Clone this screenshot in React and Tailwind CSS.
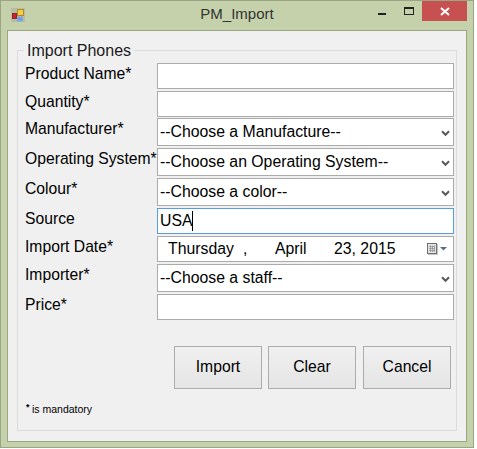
import React from "react";

const rows = [
    { label: "Product Name*", type: "text", value: "" },
    { label: "Quantity*", type: "text", value: "" },
    { label: "Manufacturer*", type: "select", value: "--Choose a Manufacture--", rowClass: "-mt-px" },
    { label: "Operating System*", type: "select", value: "--Choose an Operating System--" },
    { label: "Colour*", type: "select", value: "--Choose a color--" },
    { label: "Source", type: "focus", value: "USA" },
    { label: "Import Date*", type: "date" },
    { label: "Importer*", type: "select", value: "--Choose a staff--" },
    { label: "Price*", type: "text", value: "" },
];

const buttons = [
    { label: "Import", className: "" },
    { label: "Clear", className: "" },
    { label: "Cancel", className: "ml-px" },
];

const AppIcon = () => (
    <svg width="14" height="14" viewBox="0 0 14 14">
        <rect width="14" height="14" fill="#b4bfa6" />
        <rect x="1.5" y="5.5" width="4" height="5" fill="#d0202a" stroke="#8a2a2a" />
        <rect x="6.5" y="1.5" width="6" height="6" fill="#f7cb45" stroke="#b08a2a" />
        <rect x="6.5" y="9" width="5" height="4" fill="#6d9fe6" stroke="#88a8d8" />
    </svg>
);

const CalendarIcon = () => (
    <svg width="20" height="12" viewBox="0 0 20 12" className="block">
        <rect x="0.5" y="0.5" width="9" height="10" fill="#e4e4e4" stroke="#707070" />
        <path d="M2 3.5h6M2 5.5h6M2 7.5h6M3.5 2.5v6.5M5.5 2.5v6.5M7.5 2.5v6.5" stroke="#959595" strokeWidth="0.8" />
        <path d="M1 11.5h9.5V1" fill="none" stroke="#c4c4c4" />
        <path d="M13 4h7l-3.5 3.5z" fill="#56708f" />
    </svg>
);

const SelectArrow = () => (
    <svg width="9" height="7" viewBox="0 0 9 7" className="mt-[2px]">
        <path d="M1 1.2l3.5 3.6L8 1.2" fill="none" stroke="#5a5a5a" strokeWidth="2" />
    </svg>
);

const Field = ({ row }) => {
    if (row.type === "select") {
        return (
            <div className="h-[28px] bg-white border border-[#ababab] flex items-center justify-between pl-[2px] pr-[3px] text-[15.8px] leading-none">
                <span>{row.value}</span>
                <SelectArrow />
            </div>
        );
    }
    if (row.type === "date") {
        return (
            <div className="h-[26px] bg-white border border-[#ababab] flex items-center pl-[10px] pr-[6px] text-[15.8px] leading-none">
                <span className="w-[75px]">Thursday</span>
                <span className="w-[32px]">,</span>
                <span className="w-[59px]">April</span>
                <span>23, 2015</span>
                <span className="ml-auto">
                    <CalendarIcon />
                </span>
            </div>
        );
    }
    if (row.type === "focus") {
        return (
            <div className="h-[26px] bg-white border border-[#569de5] flex items-center pl-[2px] text-[15.8px] leading-none">
                <span>{row.value}</span>
                <span className="w-px h-[20px] bg-black" />
            </div>
        );
    }
    return <div className="h-[26px] bg-white border border-[#ababab]" />;
};

export default function App() {
    return (
        <div className="w-[477px] h-[449px] bg-white font-['Liberation_Sans',Arial,sans-serif] text-black">
            <div className="w-[474px] h-[448px] bg-[#c4d1ab] border border-[#9aa584] flex flex-col px-[6px] pb-[5px]">
                {/* Title bar */}
                <div className="relative h-[29px] flex items-center justify-center shrink-0">
                    <div className="absolute left-[4px] top-[7px]">
                        <AppIcon />
                    </div>
                    <span className="text-[15px] text-[#333] mb-[2px]">PM_Import</span>
                    <div className="absolute left-[371px] top-[12px] w-[8px] h-[2px] bg-[#222]" />
                    <div className="absolute left-[397px] top-[6px] w-[10px] h-[8px] border border-[#222] border-t-[2px]" />
                    <div className="absolute left-[415px] top-0 w-[45px] h-[20px] bg-[#c75050] flex items-center justify-center">
                        <svg width="10" height="9" viewBox="0 0 10 9">
                            <path d="M1 1l8 7M9 1l-8 7" stroke="white" strokeWidth="2" />
                        </svg>
                    </div>
                </div>

                {/* Client area */}
                <div className="flex-1 bg-[#f0f0f0] border border-[#9aa584] px-[9px] pt-[10px]">
                    <fieldset className="h-[390px] border border-[#dcdcdc] pl-[7px] pr-[2px]">
                        <legend className="-ml-px px-[3px] pt-[2px] text-[16px] leading-[16px] text-[#1a1a1a]">Import Phones</legend>
                        <div className="flex flex-col gap-[2px] mt-[4px]">
                            {rows.map((row) => (
                                <div key={row.label} className={`flex ${row.rowClass || ""}`}>
                                    <div className="w-[132px] shrink-0 whitespace-nowrap text-[15.7px] leading-[20px] pt-px">
                                        {row.label}
                                    </div>
                                    <div className="flex-1">
                                        <Field row={row} />
                                    </div>
                                </div>
                            ))}
                        </div>

                        <div className="flex justify-end gap-[6px] mt-[26px] pr-[3px]">
                            {buttons.map((b) => (
                                <button
                                    key={b.label}
                                    className={`w-[88px] h-[43px] border border-[#acacac] bg-gradient-to-b from-[#f0f0f0] to-[#e5e5e5] text-[15.7px] pb-px ${b.className}`}
                                >
                                    {b.label}
                                </button>
                            ))}
                        </div>

                        <p className="mt-[13px] ml-[1px] flex items-start text-[10.5px] leading-[14px]">
                            <span className="text-[9px] leading-[10px] font-bold w-[6px]">*</span>
                            <span>is mandatory</span>
                        </p>
                    </fieldset>
                </div>
            </div>
        </div>
    );
}
